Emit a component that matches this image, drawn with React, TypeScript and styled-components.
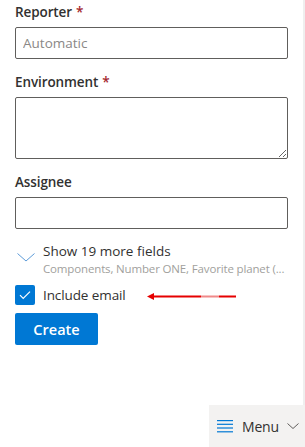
import React from "react";
import styled, { createGlobalStyle } from "styled-components";

const Global = createGlobalStyle`
  html, body { margin: 0; padding: 0; background: #ffffff; }
  body {
    font-family: "Segoe UI", "Open Sans", "Noto Sans", sans-serif;
    color: #323130;
    overflow: hidden;
  }
  * { box-sizing: border-box; }
`;

const Page = styled.div`
  display: flex;
  width: 305px;
  height: 447px;
  overflow: hidden;
`;

const Main = styled.div`
  flex: 1;
  min-width: 0;
`;

const Strip = styled.div`
  width: 2px;
  background: #efefef;
`;

const Form = styled.div`
  display: flex;
  flex-direction: column;
  padding: 0 15px;
  margin-top: -3px;
`;

const Field = styled.div`
  display: flex;
  flex-direction: column;
  margin-bottom: 8px;
`;

const Label = styled.label`
  font-size: 13.5px;
  font-weight: 600;
  line-height: 20px;
  padding: 5px 0;
  color: #323130;
  letter-spacing: -0.1px;
`;

const Req = styled.span`
  color: #a4262c;
  margin-left: 4px;
`;

const Input = styled.input`
  height: 32px;
  width: 100%;
  border: 1px solid #605e5c;
  border-radius: 2px;
  padding: 0 7px;
  font-family: inherit;
  font-size: 13.5px;
  color: #323130;
  background: #fff;
  outline: none;
  &::placeholder { color: #8a8886; }
`;

const TextArea = styled.textarea`
  height: 62px;
  width: 100%;
  border: 1px solid #605e5c;
  border-radius: 2px;
  padding: 6px 8px;
  font-family: inherit;
  font-size: 13.5px;
  display: block;
  outline: none;
  resize: vertical;
`;

const MoreRow = styled.div`
  display: flex;
  align-items: flex-start;
  gap: 8px;
  margin-top: 4px;
`;

const ChevronBox = styled.div`
  width: 20px;
  display: flex;
  justify-content: flex-end;
  padding-top: 12px;
`;

const MoreText = styled.div`
  display: flex;
  flex-direction: column;
  min-width: 0;
  flex: 1;
`;

const MoreTitle = styled.div`
  font-size: 13.5px;
  line-height: 20px;
  color: #323130;
`;

const MoreSub = styled.div`
  font-size: 11.5px;
  line-height: 16px;
  color: #a19f9d;
  white-space: nowrap;
  letter-spacing: -0.15px;
`;

const CheckRow = styled.div`
  display: flex;
  align-items: center;
  gap: 8px;
  margin-top: 8px;
`;

const Box = styled.div`
  width: 20px;
  height: 20px;
  border-radius: 2px;
  background: #0078d4;
  display: flex;
  align-items: center;
  justify-content: center;
`;

const CheckLabel = styled.span`
  font-size: 13.5px;
  line-height: 20px;
  color: #323130;
  letter-spacing: -0.1px;
`;

const Arrow = styled.svg`
  margin-left: 13px;
  margin-top: 2px;
`;

const Button = styled.button`
  margin-top: 8px;
  align-self: flex-start;
  width: 83px;
  height: 32px;
  border: none;
  border-radius: 2px;
  background: #0078d4;
  color: #fff;
  font-family: inherit;
  font-size: 14.5px;
  font-weight: 600;
  padding: 0;
`;

const MenuBar = styled.div`
  position: fixed;
  right: 0;
  bottom: 0;
  width: 96px;
  height: 42px;
  background: #f3f2f1;
  display: flex;
  align-items: center;
  padding-left: 8px;
  gap: 9px;
`;

const MenuText = styled.span`
  font-size: 14px;
  color: #323130;
  letter-spacing: -0.2px;
`;

const MenuChevron = styled.svg`
  margin-left: -1px;
`;

export default function App() {
  return (
    <>
      <Global />
      <Page>
        <Main>
          <Form>
            <Field>
              <Label>
                Reporter<Req>*</Req>
              </Label>
              <Input placeholder="Automatic" />
            </Field>
            <Field>
              <Label>
                Environment<Req>*</Req>
              </Label>
              <TextArea />
            </Field>
            <Field>
              <Label>Assignee</Label>
              <Input />
            </Field>
            <MoreRow>
              <ChevronBox>
                <svg width="18" height="9" viewBox="0 0 18 9">
                  <path d="M0.5 0.5 L9 8 L17.5 0.5" fill="none" stroke="#5c9bd8" strokeWidth="1" />
                </svg>
              </ChevronBox>
              <MoreText>
                <MoreTitle>Show 19 more fields</MoreTitle>
                <MoreSub>Components, Number ONE, Favorite planet (...</MoreSub>
              </MoreText>
            </MoreRow>
            <CheckRow>
              <Box>
                <svg width="12" height="10" viewBox="0 0 12 10">
                  <path d="M1 5.2 L4.2 8.4 L11 1.6" fill="none" stroke="#fff" strokeWidth="1.2" />
                </svg>
              </Box>
              <CheckLabel>Include email</CheckLabel>
              <Arrow width="90" height="9" viewBox="0 0 90 9">
                <path d="M0 4.5 L7 1 L7 8 Z" fill="#e60000" />
                <rect x="6" y="3.5" width="48" height="2" fill="#e60000" />
                <rect x="54" y="3.5" width="18" height="2" fill="#f08a8a" />
                <rect x="72" y="3.5" width="17" height="2" fill="#e60000" />
              </Arrow>
            </CheckRow>
            <Button>Create</Button>
          </Form>
        </Main>
        <Strip />
      </Page>
      <MenuBar>
        <svg width="16" height="13" viewBox="0 0 16 13">
          <rect x="0" y="0" width="16" height="1.2" fill="#0078d4" />
          <rect x="0" y="3.7" width="16" height="1.2" fill="#0078d4" />
          <rect x="0" y="7.4" width="16" height="1.2" fill="#0078d4" />
          <rect x="0" y="11.2" width="16" height="1.2" fill="#0078d4" />
        </svg>
        <MenuText>Menu</MenuText>
        <MenuChevron width="12" height="6" viewBox="0 0 12 6">
          <path d="M0.5 0.5 L6 5.5 L11.5 0.5" fill="none" stroke="#605e5c" strokeWidth="1" />
        </MenuChevron>
      </MenuBar>
    </>
  );
}
